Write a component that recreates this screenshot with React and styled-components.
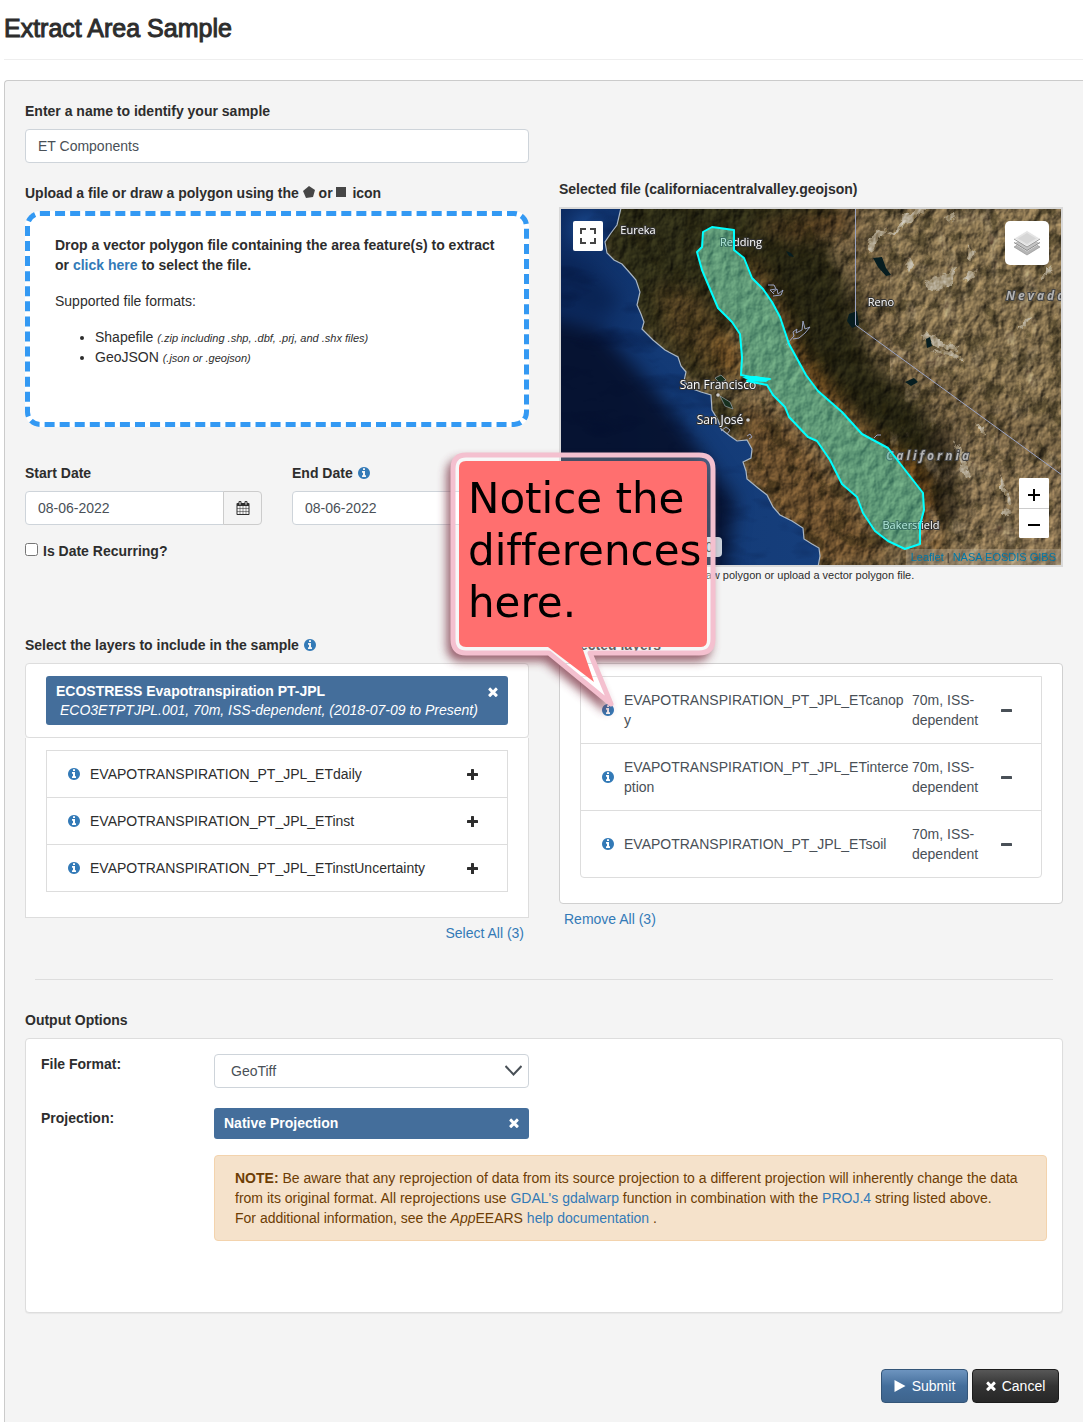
import React from "react";
import styled, { createGlobalStyle, css } from "styled-components";

const GlobalStyle = createGlobalStyle`
  *, *::before, *::after { box-sizing: border-box; }
  body {
    margin: 0;
    background: #fff;
    color: #2d2d2d;
    font-family: "Liberation Sans", Arial, Helvetica, sans-serif;
    font-size: 14px;
    line-height: 20px;
  }
  input, select, button { font: inherit; }
`;

/* ---------- page frame ---------- */

const Page = styled.main`
  position: relative;
  padding-left: 4px;
`;

const Title = styled.h1`
  margin: 0;
  padding: 13px 0 16px;
  border-bottom: 1px solid #eee;
  font-size: 25px;
  line-height: 30px;
  font-weight: 500;
  -webkit-text-stroke: 1px #2d2d2d;
`;

const Panel = styled.form`
  margin-top: 20px;
  padding: 20px 20px 19px;
  background: #f4f4f4;
  border: solid #cbcbcb;
  border-width: 1px 0 0 1px;
  border-top-left-radius: 4px;
`;

const Columns = styled.div`
  display: grid;
  grid-template-columns: repeat(2, minmax(0, 1fr));
  column-gap: 30px;
  align-items: start;
`;

const MapColumn = styled.div`
  padding-top: 78px;
`;

/* ---------- form parts ---------- */

const labelStyle = css`
  display: block;
  margin: 0 0 8px;
  font-size: 14px;
  line-height: 20px;
  font-weight: 700;
`;

const Label = styled.label`
  ${labelStyle}
`;

const Heading = styled.h2`
  ${labelStyle}
`;

const fieldStyle = css`
  width: 100%;
  height: 34px;
  padding: 6px 12px;
  border: 1px solid #ced4da;
  border-radius: 4px;
  background: #fff;
  color: #495057;
`;

const TextInput = styled.input`
  ${fieldStyle}
  display: block;
`;

const Field = styled.div`
  margin-bottom: ${(p) => p.$gap || 0}px;
`;

const InputGroup = styled.div`
  display: flex;

  ${TextInput} {
    flex: 1;
    min-width: 0;
    border-radius: 4px 0 0 4px;
  }
`;

const AddonButton = styled.button`
  display: flex;
  align-items: center;
  justify-content: center;
  width: 39px;
  height: 34px;
  margin-left: -1px;
  padding: 0;
  border: 1px solid #ccc;
  border-radius: 0 4px 4px 0;
  background: #f4f4f4;
  color: #2d2d2d;
`;

const CheckLabel = styled.label`
  display: flex;
  gap: 5px;
  font-weight: 700;
`;

const Checkbox = styled.input`
  width: 13px;
  height: 13px;
  margin: 2px 0 0;
`;

const Link = styled.a`
  color: #337ab7;
  text-decoration: none;
`;

const DropZone = styled.div`
  height: 216px;
  margin-bottom: 36px;
  padding: 19px 25px;
  border: 5px dashed #3399f3;
  border-radius: 15px;
  background: #fff;

  p { margin: 0 0 16px; }
  ul { margin: 0; padding-left: 40px; }
  em { font-size: 11px; line-height: 11px; }
`;

const Icon = styled.svg`
  flex: none;
  width: ${(p) => p.$size || 14}px;
  height: ${(p) => p.$size || 14}px;
  fill: currentColor;
`;

const InfoMark = styled(Icon)`
  vertical-align: -2px;
  color: #337ab7;
`;

const ShapeMark = styled(Icon)`
  vertical-align: baseline;
  color: #464646;
`;

const IconButton = styled.button`
  display: flex;
  align-items: center;
  padding: 0;
  border: 0;
  background: none;
  color: inherit;
`;

/* ---------- map ---------- */

const MapFrame = styled.div`
  position: relative;
  height: 360px;
  overflow: hidden;
  border: 2px solid #d9d9d9;
`;

const MapSvg = styled.svg`
  display: block;
  width: 100%;
  height: 100%;

  .town {
    fill: #fff;
    stroke: #333;
    stroke-width: 2px;
    paint-order: stroke;
    font-family: "Open Sans", "Noto Sans", sans-serif;
    text-anchor: middle;
  }
  .state {
    fill: #b4b4b4;
    stroke: #444;
    stroke-width: 2px;
    paint-order: stroke;
    font: italic 700 12px "Open Sans", "Noto Sans", sans-serif;
    letter-spacing: 3px;
  }
`;

const MapControl = styled.button`
  position: absolute;
  display: flex;
  align-items: center;
  justify-content: center;
  padding: 0;
  border: 0;
  border-radius: ${(p) => (p.$large ? 5 : 2)}px;
  width: ${(p) => (p.$large ? 44 : 30)}px;
  height: ${(p) => (p.$large ? 44 : 30)}px;
  top: 12px;
  ${(p) => (p.$large ? "right: 12px;" : "left: 12px;")}
  background: #fff;
  color: #444;
`;

const ZoomBar = styled.div`
  position: absolute;
  right: 12px;
  bottom: 27px;
  overflow: hidden;
  border-radius: 2px;
  background: #fff;
`;

const ZoomButton = styled.button`
  display: flex;
  align-items: center;
  justify-content: center;
  width: 30px;
  height: 30px;
  padding: 4px 0 0;
  border: 0;
  background: #fff;
  color: #000;

  & + & {
    padding-top: 2px;
    border-top: 1px solid #ccc;
  }
`;

const Attribution = styled.div`
  position: absolute;
  right: 0;
  bottom: 0;
  padding: 0 5px;
  background: rgba(190, 175, 150, 0.4);
  color: #333;
  font-size: 11px;
  line-height: 16px;

  a { color: #0078a8; text-decoration: none; }
`;

const Coordinates = styled.output`
  position: absolute;
  left: 59px;
  bottom: 8px;
  width: 102px;
  padding-right: 9px;
  border-radius: 4px;
  background: #ccd3dc;
  text-align: right;
`;

const Caption = styled.p`
  margin: 0;
  font-size: 11px;
  line-height: 16px;
`;

/* ---------- layers ---------- */

const Box = styled.div`
  padding: ${(p) => (p.$list ? "12px 20px 25px" : "12px 20px")};
  border: 1px solid ${(p) => (p.$strong ? "#d0d0d0" : "#ddd")};
  border-radius: 4px;
  background: #fff;

  & + & { border-top: 0; border-radius: 0; }
`;

const Tag = styled.div`
  display: flex;
  align-items: flex-start;
  justify-content: space-between;
  padding: ${(p) => (p.$single ? "5px 10px 6px" : "6px 10px 5px")};
  border-radius: 3px;
  background: #446e9b;
  color: #fff;
  line-height: ${(p) => (p.$single ? 20 : 19)}px;

  strong, em { display: block; }
  em { padding-left: 4px; }
  ${IconButton} { height: ${(p) => (p.$single ? 20 : 19)}px; }
`;

const LayerList = styled.ul`
  margin: 0;
  padding: 0;
  list-style: none;
  border: 1px solid #ddd;
  border-radius: ${(p) => (p.$rounded ? "0 0 4px 4px" : "0")};
`;

const LayerRow = styled.li`
  box-sizing: content-box;
  display: grid;
  grid-template-columns: 23px minmax(0, 1fr) ${(p) => (p.$wide ? "91px" : "")} 40px;
  align-items: center;
  min-height: ${(p) => (p.$wide ? 66 : 46)}px;
  padding-left: 20px;
  color: ${(p) => (p.$wide ? "#495057" : "#2d2d2d")};

  & + & { border-top: 1px solid #ddd; }
`;

const LayerName = styled.span`
  word-break: break-all;
`;

const LayerMeta = styled.span`
  padding-left: 2px;
`;

const ListAction = styled.div`
  padding: 5px 5px 0;
  text-align: ${(p) => p.$align};
`;

const Divider = styled.hr`
  margin: 36px 10px 30px;
  border: 0;
  border-top: 1px solid #ddd;
`;

/* ---------- output options ---------- */

const OptionsBox = styled.div`
  display: grid;
  grid-template-columns: 173px minmax(0, 1fr);
  padding: 15px 15px 71px;
  border: 1px solid #ddd;
  border-radius: 4px;
  background: #fff;
  box-shadow: 0 1px 1px rgba(0, 0, 0, 0.05);
`;

const OptionField = styled.div`
  position: relative;
  width: 315px;
  max-width: 100%;
  margin-bottom: ${(p) => p.$gap}px;
`;

const Select = styled.select`
  ${fieldStyle}
  padding-left: 16px;
  appearance: none;
`;

const Chevron = styled.svg`
  position: absolute;
  right: 7px;
  top: 11px;
  width: 17px;
  height: 12px;
  pointer-events: none;
`;

const Note = styled.p`
  grid-column: 2;
  margin: 0;
  padding: 12px 16px 12px 20px;
  border: 1px solid #f3d3ad;
  border-radius: 4px;
  background: #f5e2cb;
  color: #6d3d04;
`;

const Actions = styled.div`
  display: flex;
  justify-content: flex-end;
  gap: 4px;
  margin-top: 56px;
  padding-right: 4px;
`;

const ActionButton = styled.button`
  display: flex;
  align-items: center;
  justify-content: center;
  gap: 6px;
  min-width: 87px;
  height: 34px;
  padding: 0 10px;
  border: 1px solid ${(p) => (p.$primary ? "#345578" : "#1c1c1c")};
  border-radius: 4px;
  background: ${(p) =>
    p.$primary
      ? "linear-gradient(#6d94bf, #446e9b 50%, #3e648d)"
      : "linear-gradient(#575757, #333 50%, #272727)"};
  color: #fff;
`;

/* ---------- callout ---------- */

const Callout = styled.aside`
  position: absolute;
  left: 430px;
  top: 440px;
  width: 300px;
  height: 290px;
  padding: 33px 26px 0 38px;
  pointer-events: none;
  color: #000;
  font: 42px/52px "DejaVu Sans", Verdana, sans-serif;
  font-variant-ligatures: none;

  svg { position: absolute; inset: 0; overflow: visible; }
  span { position: relative; }
`;

/* ---------- icons ---------- */

const ICONS = {
  info: "M1152 1376v-160q0-14-9-23t-23-9h-96v-512q0-14-9-23t-23-9h-320q-14 0-23 9t-9 23v160q0 14 9 23t23 9h96v320h-96q-14 0-23 9t-9 23v160q0 14 9 23t23 9h448q14 0 23-9t9-23zm-128-896v-160q0-14-9-23t-23-9h-192q-14 0-23 9t-9 23v160q0 14 9 23t23 9h192q14 0 23-9t9-23zm640 416q0 209-103 385.5t-279.5 279.5-385.5 103-385.5-103-279.5-279.5-103-385.5 103-385.5 279.5-279.5 385.5-103 385.5 103 279.5 279.5 103 385.5z",
  times: "M1490 1322q0 40-28 68l-136 136q-28 28-68 28t-68-28l-294-294-294 294q-28 28-68 28t-68-28l-136-136q-28-28-28-68t28-68l294-294-294-294q-28-28-28-68t28-68l136-136q28-28 68-28t68 28l294 294 294-294q28-28 68-28t68 28l136 136q28 28 28 68t-28 68l-294 294 294 294q28 28 28 68z",
  calendar: "M192 1664h288v-288h-288v288zm352 0h320v-288h-320v288zm-352-352h288v-320h-288v320zm352 0h320v-320h-320v320zm-352-384h288v-288h-288v288zm736 736h320v-288h-320v288zm-384-736h320v-288h-320v288zm768 736h288v-288h-288v288zm-384-352h320v-320h-320v320zm-352-864v-288q0-13-9.5-22.5t-22.5-9.5h-64q-13 0-22.5 9.5t-9.5 22.5v288q0 13 9.5 22.5t22.5 9.5h64q13 0 22.5-9.5t9.5-22.5zm736 864h288v-320h-288v320zm-384-384h320v-288h-320v288zm384 0h288v-288h-288v288zm32-480v-288q0-13-9.5-22.5t-22.5-9.5h-64q-13 0-22.5 9.5t-9.5 22.5v288q0 13 9.5 22.5t22.5 9.5h64q13 0 22.5-9.5t9.5-22.5zm384-64v1280q0 52-38 90t-90 38h-1408q-52 0-90-38t-38-90v-1280q0-52 38-90t90-38h128v-96q0-66 47-113t113-47h64q66 0 113 47t47 113v96h384v-96q0-66 47-113t113-47h64q66 0 113 47t47 113v96h128q52 0 90 38t38 90z",
};

const InfoIcon = () => (
  <InfoMark viewBox="0 0 1792 1792" $size={14} aria-hidden="true">
    <path d={ICONS.info} />
  </InfoMark>
);

const TimesIcon = () => (
  <Icon viewBox="300 290 1192 1270" $size={10} aria-hidden="true">
    <path d={ICONS.times} />
  </Icon>
);

const SignIcon = ({ plus }) => (
  <Icon viewBox="0 0 11 11" $size={11} aria-hidden="true">
    <rect x="0" y="4" width="11" height="3" rx="0.6" />
    {plus && <rect x="4" y="0" width="3" height="11" rx="0.6" />}
  </Icon>
);

/* ---------- map drawing ---------- */

const COAST =
  "M621 208 L617 225 L611 233 L605 242 L607 253 L614 260 L622 264 L630 273 L636 280 L640 292 L637 305 L641 314 L644 322 L642 329 L653 340 L665 350 L678 357 L681 366 L686 372 L684 381 L690 388 L701 392 L711 395 L712 410 L718 420 L721 429 L730 436 L737 441 L747 440 L752 449 L751 458 L743 462 L746 471 L747 479 L758 488 L767 495 L773 507 L780 515 L792 521 L803 528 L804 539 L812 544 L819 548 L820 556 L818 567";

const VALLEY =
  "M712 227 L734 230 L734 250 L744 258 L752 278 L763 289 L772 302 L780 317 L789 344 L806 375 L818 391 L842 412 L862 434 L888 448 L923 493 L924 510 L920 525 L920 544 L905 549 L888 541 L875 531 L863 513 L857 497 L842 484 L830 460 L817 441 L808 437 L789 417 L785 407 L773 395 L767 385 L747 381 L770 379 L751 377 L741 375 L742 357 L740 334 L732 322 L718 308 L702 270 L697 252 L702 247 L703 232 Z";

const PLAYAS = [
  "M868 251 l2 -14 8 -6 9 -4 -3 9 -8 6 -4 11z",
  "M888 235 l10 -8 6 -12 12 -6 12 -1 -14 11 -10 7 -8 8z",
  "M925 284 l8 -6 12 -4 12 -8 -2 12 -8 10 -14 3 -6 -3z",
  "M961 282 l9 -10 8 -2 -8 10z",
  "M968 258 l3 -14 3 8 -1 8z",
  "M1018 330 l8 -12 6 -2 -6 10z",
  "M1043 279 l4 -14 3 2 -3 12z",
  "M976 422 l8 6 3 8 -7 -4z",
  "M932 350 l16 1 12 4 4 8 -8 -5 -18 -3z",
  "M905 262 l5 -6 4 10 -5 6z",
  "M1006 508 l6 4 -3 4 -6 -3z",
  "M944 216 l10 -4 2 4 -6 6z",
  "M1000 472 l5 14 8 16 -4 1 -8 -17z",
  "M955 438 l7 16 10 22 -6 2 -8 -18z",
  "M918 335 l12 -2 14 10 16 4 -4 3 -18 -3z",
];

const LAKES = [
  "M873 258 l9 -1 4 11 5 7 -5 1 -8 -9z",
  "M849 314 l8 -3 2 14 -7 3 -5 -7z",
  "M926 339 l4 -2 2 9 -5 2z",
  "M905 382 l9 -4 4 4 -7 4z",
  "M786 251 l5 2 3 4 -5 -1z",
];

const MapImage = () => (
  <MapSvg viewBox="561 209 500 356" preserveAspectRatio="xMidYMid slice" role="img" aria-label="Satellite map of California">
    <defs>
      <linearGradient id="sea" x1="0" y1="0" x2="1" y2="0">
        <stop offset="0" stopColor="#0c2a60" />
        <stop offset="0.2" stopColor="#133a76" />
        <stop offset="1" stopColor="#1a4584" />
      </linearGradient>
      <clipPath id="landClip">
        <path d={`${COAST} L1070 567 L1070 200 L621 200 Z`} />
      </clipPath>
      <clipPath id="seaClip">
        <path d={`${COAST} L550 567 L550 200 L621 200 Z`} />
      </clipPath>
      <filter id="soft" x="-30%" y="-30%" width="160%" height="160%" colorInterpolationFilters="sRGB">
        <feGaussianBlur stdDeviation="9" />
      </filter>
      <filter id="edge" x="-10%" y="-10%" width="120%" height="120%" colorInterpolationFilters="sRGB">
        <feTurbulence type="fractalNoise" baseFrequency="0.12" numOctaves="3" seed="4" />
        <feDisplacementMap in="SourceGraphic" scale="9" xChannelSelector="R" yChannelSelector="G" />
      </filter>
      <filter id="relief" x="0" y="0" width="100%" height="100%" colorInterpolationFilters="sRGB">
        <feTurbulence type="fractalNoise" baseFrequency="0.1 0.07" numOctaves="5" seed="11" />
        <feColorMatrix values="0 0 0 0 0  0 0 0 0 0  0 0 0 0 0  1 0 0 0 0" />
        <feDiffuseLighting surfaceScale="2" diffuseConstant="1" lightingColor="#ffffff">
          <feDistantLight azimuth="225" elevation="32" />
        </feDiffuseLighting>
      </filter>
      <filter id="mottle" x="0" y="0" width="100%" height="100%" colorInterpolationFilters="sRGB">
        <feTurbulence type="fractalNoise" baseFrequency="0.06" numOctaves="5" seed="23" />
        <feColorMatrix values="0 0 0 0 0.1  0 0 0 0 0.09  0 0 0 0 0.03  5 0 0 0 -2.5" />
      </filter>
      <filter id="dust" x="0" y="0" width="100%" height="100%" colorInterpolationFilters="sRGB">
        <feTurbulence type="fractalNoise" baseFrequency="0.05 0.035" numOctaves="5" seed="41" />
        <feColorMatrix values="0 0 0 0 0.66  0 0 0 0 0.58  0 0 0 0 0.46  5 0 0 0 -2.8" />
      </filter>
      <filter id="deep" x="0" y="0" width="100%" height="100%" colorInterpolationFilters="sRGB">
        <feTurbulence type="fractalNoise" baseFrequency="0.012 0.03" numOctaves="4" seed="7" />
        <feColorMatrix values="0 0 0 0 0  0 0 0 0 0.05  0 0 0 0 0.18  4 0 0 0 -2.1" />
      </filter>
    </defs>

    <rect x="560" y="208" width="502" height="358" fill="url(#sea)" />
    <g clipPath="url(#seaClip)">
      <g filter="url(#soft)">
        <path d="M540 315 L600 330 L655 390 L700 450 L735 500 L725 580 L540 580 Z" fill="#06122f" opacity="0.95" />
        <path d="M550 255 L590 270 L620 300 L600 320 L550 300 Z" fill="#0a2454" />
        <path d="M575 215 L600 215 L595 240 L570 240 Z" fill="#1c4c92" />
      </g>
      <rect x="560" y="200" width="270" height="370" filter="url(#deep)" opacity="0.35" />
    </g>

    <g clipPath="url(#landClip)">
      <rect x="560" y="200" width="510" height="370" fill="#6e5c3f" />
      <g filter="url(#soft)">
        <path d="M875 200 L1070 200 L1070 440 L900 350 Z" fill="#7a6848" />
        <path d="M955 430 L1070 460 L1070 570 L950 570 Z" fill="#7d694a" />
        <path d="M600 190 L825 190 L835 225 L790 240 L760 260 L730 330 L745 380 L690 380 L640 330 L600 250 Z" fill="#2b2a15" />
        <path d="M750 250 L820 235 L850 290 L870 360 L905 390 L950 440 L955 540 L925 500 L880 440 L810 370 L780 310 Z" fill="#252311" />
        <path d="M655 285 L700 290 L735 350 L745 385 L700 370 L665 335 Z" fill="#4a3a1e" />
        <path d="M715 320 L740 350 L742 376 L720 366 Z" fill="#6b4a20" />
        <path d="M738 245 L762 275 L800 350 L860 425 L925 470 L940 560 L920 540 L880 455 L800 380 L770 310 Z" fill="#714718" opacity="0.85" />
        <path d="M740 400 L790 425 L850 500 L890 560 L820 570 L740 480 Z" fill="#644a2a" />
        <path d="M700 395 L730 400 L745 435 L722 428 Z" fill="#262711" />
        <path d="M745 225 L850 205 L850 235 L790 240 Z" fill="#4b371d" />
        <path d="M925 420 L955 430 L960 530 L935 520 Z" fill="#30281a" />
      </g>
      <rect x="560" y="200" width="510" height="370" filter="url(#mottle)" opacity="0.45" />
      <rect x="890" y="200" width="180" height="370" filter="url(#dust)" opacity="0.4" />
      <path d={VALLEY} fill="#6a7050" />
      <g fill="#b0a48c" opacity="0.85" filter="url(#edge)">
        {PLAYAS.map((d) => <path key={d} d={d} />)}
      </g>
      <rect x="560" y="200" width="510" height="370" filter="url(#relief)" style={{ mixBlendMode: "overlay" }} opacity="0.75" />
      <g fill="#071d20">
        {LAKES.map((d) => <path key={d} d={d} />)}
        <path d="M720 396 L730 402 L733 409 L725 406 Z" fill="#17301f" stroke="#a8b4c0" strokeWidth="0.6" />
        <path d="M715 378 L721 375 L726 380 L720 383 Z" fill="#17301f" stroke="#a8b4c0" strokeWidth="0.6" />
      </g>
    </g>

    <path d={COAST} fill="none" stroke="#a9b6c4" strokeWidth="1.2" />
    <g fill="none" stroke="#9aa3c2" strokeWidth="1">
      <path d="M855.5 208 V325 L1062 475" />
      <path d="M768 285 l6 0 2 4 -6 1 4 4 M772 293 l5 -4 1 5 5 -4 -2 5 -8 1 M786 345 l8 -9 -1 -4 4 -3 -1 4 6 -3 1 -9 2 8 5 -2 -5 6 -6 5 -6 1 M721 431 l5 -4 4 3 -3 4 M747 436 l3 -2 2 3 -3 2 M874 438 l3 -3 4 0" />
    </g>

    <g fontSize="11">
      <text className="town" x="638" y="234">Eureka</text>
      <text className="town" x="741" y="246">Redding</text>
      <text className="town" x="881" y="306">Reno</text>
      <text className="town" x="911" y="529">Bakersfield</text>
    </g>
    <g fontSize="12">
      <text className="town" x="718" y="389">San Francisco</text>
      <text className="town" x="720" y="424">San José</text>
    </g>
    <circle cx="718" cy="395" r="1.8" fill="#ccc" />
    <circle cx="748" cy="420" r="1.8" fill="#ccc" />
    <text className="state" x="1006" y="300">Nevada</text>
    <text className="state" x="886" y="460">California</text>

    <path d={VALLEY} fill="#48c8a8" fillOpacity="0.42" stroke="#00ffff" strokeWidth="2" strokeLinejoin="round" />
    <path d="M742 377 L756 376 L770 379 L766 382 L750 381 Z" fill="#00ffff" />
  </MapSvg>
);

const AVAILABLE = [
  "EVAPOTRANSPIRATION_PT_JPL_ETdaily",
  "EVAPOTRANSPIRATION_PT_JPL_ETinst",
  "EVAPOTRANSPIRATION_PT_JPL_ETinstUncertainty",
];

const SELECTED = [
  "EVAPOTRANSPIRATION_PT_JPL_ETcanopy",
  "EVAPOTRANSPIRATION_PT_JPL_ETinterception",
  "EVAPOTRANSPIRATION_PT_JPL_ETsoil",
];

const DateField = ({ id, label, info }) => (
  <Field $gap={16}>
    <Label htmlFor={id}>
      {label} {info && <InfoIcon />}
    </Label>
    <InputGroup>
      <TextInput id={id} defaultValue="08-06-2022" />
      <AddonButton type="button" aria-label={`Choose ${label}`}>
        <Icon viewBox="0 0 1792 1792" $size={14} aria-hidden="true">
          <path d={ICONS.calendar} />
        </Icon>
      </AddonButton>
    </InputGroup>
  </Field>
);

const Row = ({ name, meta }) => (
  <LayerRow $wide={!!meta}>
    <InfoIcon />
    <LayerName>{name}</LayerName>
    {meta && <LayerMeta>{meta}</LayerMeta>}
    <IconButton type="button" aria-label={`${meta ? "Remove" : "Add"} ${name}`}>
      <SignIcon plus={!meta} />
    </IconButton>
  </LayerRow>
);

const BUBBLE =
  "M36 15 H269 Q283 15 283 29 V199 Q283 213 269 213 H160 L181 264 L119 213 H36 Q23 213 23 199 V29 Q23 15 36 15 Z";
const BUBBLE_FILL =
  "M36 21 H271 Q277 21 277 28 V200 Q277 207 271 207 H152 L164 242 L118 207 H36 Q29 207 29 200 V28 Q29 21 36 21 Z";

export default function App() {
  return (
    <>
      <GlobalStyle />
      <Page>
        <Title>Extract Area Sample</Title>
        <Panel onSubmit={(e) => e.preventDefault()}>
          <Columns>
            <div>
              <Field $gap={20}>
                <Label htmlFor="sample-name">Enter a name to identify your sample</Label>
                <TextInput id="sample-name" defaultValue="ET Components" />
              </Field>
              <Heading>
                Upload a file or draw a polygon using the{" "}
                <ShapeMark viewBox="0 0 12 12" $size={12} role="img" aria-label="polygon">
                  <path d="M6 0 L12 4 L10 11 L3 12 L0 5 Z" />
                </ShapeMark>{" "}
                or{" "}
                <ShapeMark viewBox="0 0 12 12" $size={12} role="img" aria-label="rectangle">
                  <path d="M0 1 H10 V11 H0 Z" />
                </ShapeMark>{" "}
                icon
              </Heading>
              <DropZone>
                <p>
                  <strong>
                    Drop a vector polygon file containing the area feature(s) to extract or{" "}
                    <Link href="#file">click here</Link> to select the file.
                  </strong>
                </p>
                <p>Supported file formats:</p>
                <ul>
                  <li>Shapefile <em>(.zip including .shp, .dbf, .prj, and .shx files)</em></li>
                  <li>GeoJSON <em>(.json or .geojson)</em></li>
                </ul>
              </DropZone>
              <Columns>
                <DateField id="start-date" label="Start Date" />
                <DateField id="end-date" label="End Date" info />
              </Columns>
              <Field $gap={74}>
                <CheckLabel>
                  <Checkbox type="checkbox" />
                  Is Date Recurring?
                </CheckLabel>
              </Field>
            </div>

            <MapColumn>
              <Heading>Selected file (californiacentralvalley.geojson)</Heading>
              <MapFrame>
                <MapImage />
                <MapControl type="button" aria-label="Full screen">
                  <svg width="16" height="16" viewBox="0 0 16 16" fill="none" stroke="currentColor" strokeWidth="2">
                    <path d="M1 6 V1 H6 M10 1 H15 V6 M15 10 V15 H10 M6 15 H1 V10" />
                  </svg>
                </MapControl>
                <MapControl type="button" $large aria-label="Layers">
                  <svg width="26" height="26" viewBox="0 0 26 26">
                    <path d="M0 17 L13 9 L26 17 L13 25 Z" fill="#b5b5b5" stroke="#8c8c8c" strokeWidth="0.6" />
                    <path d="M0 13 L13 5 L26 13 L13 21 Z" fill="#c4c4c4" stroke="#fff" strokeWidth="0.8" />
                    <path d="M0 12.500 L13 20.500 L26 12.500" fill="none" stroke="#8c8c8c" strokeWidth="1" />
                    <path d="M0 8.500 L13 0.500 L26 8.500 L13 16.500 Z" fill="#e4e4e4" stroke="#fff" strokeWidth="0.8" />
                    <path d="M4 8.500 L13 3 L22 8.500 L13 14 Z" fill="#d6d6d6" />
                    <path d="M0 9 L13 17 L26 9" fill="none" stroke="#9a9a9a" strokeWidth="1" />
                  </svg>
                </MapControl>
                <ZoomBar>
                  <ZoomButton type="button" aria-label="Zoom in">
                    <svg width="12" height="12" viewBox="0 0 12 12" stroke="currentColor" strokeWidth="2">
                      <path d="M0 6 H12 M6 0 V12" />
                    </svg>
                  </ZoomButton>
                  <ZoomButton type="button" aria-label="Zoom out">
                    <svg width="12" height="12" viewBox="0 0 12 12" stroke="currentColor" strokeWidth="2">
                      <path d="M0 6 H12" />
                    </svg>
                  </ZoomButton>
                </ZoomBar>
                <Coordinates>0</Coordinates>
                <Attribution>
                  <a href="#leaflet">Leaflet</a> | <a href="#gibs">NASA EOSDIS GIBS</a>
                </Attribution>
              </MapFrame>
              <Caption>Use the map tools above to draw polygon or upload a vector polygon file.</Caption>
            </MapColumn>
          </Columns>

          <Columns>
            <section>
              <Heading>
                Select the layers to include in the sample <InfoIcon />
              </Heading>
              <Box>
                <Tag>
                  <div>
                    <strong>ECOSTRESS Evapotranspiration PT-JPL</strong>
                    <em>ECO3ETPTJPL.001, 70m, ISS-dependent, (2018-07-09 to Present)</em>
                  </div>
                  <IconButton type="button" aria-label="Clear product"><TimesIcon /></IconButton>
                </Tag>
              </Box>
              <Box $list>
                <LayerList>
                  {AVAILABLE.map((name) => <Row key={name} name={name} />)}
                </LayerList>
              </Box>
              <ListAction $align="right"><Link href="#select-all">Select All (3)</Link></ListAction>
            </section>

            <section>
              <Heading>Selected layers</Heading>
              <Box $list $strong>
                <LayerList $rounded>
                  {SELECTED.map((name) => <Row key={name} name={name} meta="70m, ISS-dependent" />)}
                </LayerList>
              </Box>
              <ListAction $align="left"><Link href="#remove-all">Remove All (3)</Link></ListAction>
            </section>
          </Columns>

          <Divider />

          <Heading>Output Options</Heading>
          <OptionsBox>
            <Label htmlFor="file-format">File Format:</Label>
            <OptionField $gap={20}>
              <Select id="file-format" defaultValue="GeoTiff">
                <option>GeoTiff</option>
                <option>NetCDF-4</option>
              </Select>
              <Chevron viewBox="0 0 17 12" fill="none" stroke="#495057" strokeWidth="2" aria-hidden="true">
                <path d="M0.500 1 L8.500 9.500 L16.500 1" />
              </Chevron>
            </OptionField>
            <Heading as="span">Projection:</Heading>
            <OptionField $gap={16}>
              <Tag $single>
                <strong>Native Projection</strong>
                <IconButton type="button" aria-label="Clear projection"><TimesIcon /></IconButton>
              </Tag>
            </OptionField>
            <Note>
              <strong>NOTE:</strong> Be aware that any reprojection of data from its source projection to a
              different projection will inherently change the data from its original format. All
              reprojections use <Link href="#gdalwarp">GDAL's gdalwarp</Link> function in combination with
              the <Link href="#proj4">PROJ.4</Link> string listed above.
              <br />
              For additional information, see the <i>App</i>EEARS{" "}
              <Link href="#help">help documentation</Link> .
            </Note>
          </OptionsBox>

          <Actions>
            <ActionButton type="submit" $primary>
              <Icon viewBox="0 0 12 12" $size={12} aria-hidden="true"><path d="M0.500 0 L11.500 6 L0.500 12 Z" /></Icon>
              Submit
            </ActionButton>
            <ActionButton type="button">
              <TimesIcon />
              Cancel
            </ActionButton>
          </Actions>
        </Panel>

        <Callout>
          <svg width="300" height="290" viewBox="0 0 300 290" aria-hidden="true">
            <defs>
              <filter id="shade" x="-20%" y="-20%" width="140%" height="140%">
                <feGaussianBlur stdDeviation="5" />
              </filter>
              <mask id="outside">
                <rect x="-30" y="-30" width="360" height="360" fill="#fff" />
                <path d={BUBBLE} fill="#000" />
              </mask>
            </defs>
            <g mask="url(#outside)">
              <path d={BUBBLE} transform="translate(-4 6)" fill="#7d3445" stroke="#7d3445" strokeWidth="5" opacity="0.75" filter="url(#shade)" />
            </g>
            <path d={BUBBLE} fill="#fff" fillOpacity="0.25" stroke="#f4c0cf" strokeWidth="5" strokeLinejoin="round" />
            <path d={BUBBLE_FILL} fill="#ff6f6f" />
          </svg>
          <span>Notice the differences here.</span>
        </Callout>
      </Page>
    </>
  );
}
